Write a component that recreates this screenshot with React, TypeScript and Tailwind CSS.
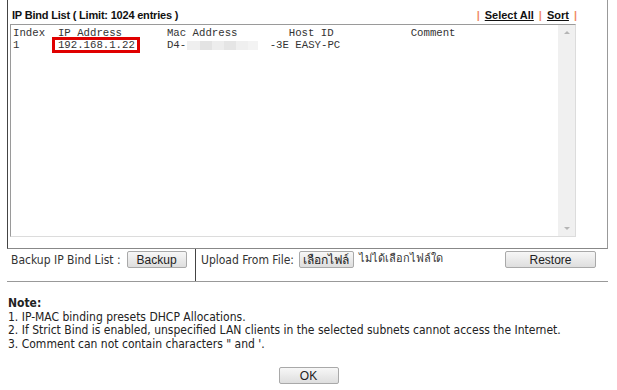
import React from "react";

const mono = { fontFamily: '"Liberation Mono", "Courier New", monospace' } as const;
const sans = { fontFamily: 'Tahoma, "DejaVu Sans Condensed", "Liberation Sans", sans-serif' } as const;

function Btn({ children, className = "" }: { children: React.ReactNode; className?: string }) {
  return (
    <div
      className={
        "flex items-center justify-center border border-[#a9a9a9] rounded-[2px] bg-gradient-to-b from-[#f7f7f7] to-[#dedede] text-[12px] text-[#222] " +
        className
      }
      style={{ fontFamily: '"Liberation Sans", Arial, sans-serif' }}
    >
      {children}
    </div>
  );
}

export default function App() {
  return (
    <div className="w-[617px] h-[390px] bg-white overflow-hidden relative" style={{ fontFamily: '"Liberation Sans", Arial, sans-serif' }}>
      {/* outer panel */}
      <div className="ml-[7px] w-[601px] h-[249px] border-l border-l-[#444] border-r border-r-[#999] border-b border-b-[#888] flex flex-col">
        <div className="h-[24px] flex items-end pl-[4px] pr-[30px] pb-[1px]">
          <div className="text-[11px] font-bold text-[#111] tracking-[-0.2px]">IP Bind List ( Limit: 1024 entries )</div>
          <div className="ml-auto flex items-center text-[11px] font-bold">
            <span className="text-[#f08a6a] mr-[5px]">|</span>
            <span className="underline text-[#111]">Select All</span>
            <span className="text-[#f08a6a] mx-[5px]">|</span>
            <span className="underline text-[#111]">Sort</span>
            <span className="text-[#f08a6a] ml-[5px]">|</span>
          </div>
        </div>
        <div className="ml-[2px] w-[566px] h-[213px] border border-t-[#9a9a9a] border-l-[#9a9a9a] border-r-[#dcdcdc] border-b-[#dcdcdc] flex">
          <div className="flex-1 relative text-[10.7px] leading-[12px] text-[#333] pl-[2px] pt-[2px] whitespace-pre" style={mono}>
            <div>{"Index  IP Address       Mac Address        Host ID            Comment"}</div>
            <div className="flex">
              <span>{"1      192.168.1.22     D4-"}</span>
              <span className="inline-flex w-[83.5px] h-[12px] items-center">
                <span className="w-[1px]" />
                <span className="w-[13px] h-[9px] bg-[#efefef]" />
                <span className="w-[12px] h-[9px] bg-[#e3e3e3]" />
                <span className="w-[12px] h-[9px] bg-[#ededed]" />
                <span className="w-[12px] h-[9px] bg-[#e5e5e5]" />
                <span className="w-[12px] h-[9px] bg-[#efefef]" />
                <span className="w-[10px] h-[9px] bg-[#f3f3f3]" />
              </span>
              <span>{"-3E EASY-PC"}</span>
            </div>
            <div className="absolute left-[41px] top-[12px] w-[88px] h-[16px] border-[3px] border-[#e00000]" />
          </div>
          <div className="w-[17px] bg-[#f0f0f0] flex flex-col items-center justify-between py-[6px]">
            <div className="w-0 h-0 border-l-[3px] border-r-[3px] border-b-[3px] border-l-transparent border-r-transparent border-b-[#b5b5b5]" />
            <div className="w-0 h-0 border-l-[3px] border-r-[3px] border-t-[3px] border-l-transparent border-r-transparent border-t-[#b5b5b5]" />
          </div>
        </div>
      </div>

      {/* backup / upload row */}
      <div className="ml-[7px] w-[601px] h-[33px] border-b border-b-[#999] flex text-[12px] text-[#333]" style={sans}>
        <div className="w-[189px] border-r border-r-[#444] flex items-start pt-[2px] pl-[4px]">
          <span className="h-[17px] flex items-center">Backup IP Bind List :</span>
          <Btn className="ml-[6px] w-[60px] h-[17px]">Backup</Btn>
        </div>
        <div className="flex-1 flex items-start pt-[2px] pl-[5px]">
          <span className="h-[17px] flex items-center">Upload From File:</span>
          <Btn className="ml-[5px] w-[55px] h-[17px] text-[11px]">เลือกไฟล์</Btn>
          <span className="ml-[5px] h-[17px] flex items-center text-[11px]">ไม่ได้เลือกไฟล์ใด</span>
          <Btn className="ml-auto mr-[12px] w-[91px] h-[17px]">Restore</Btn>
        </div>
      </div>

      {/* notes */}
      <div className="pl-[8px] pt-[15px] text-[12px] leading-[13.5px] text-[#222]" style={sans}>
        <div className="font-bold">Note:</div>
        <div>1. IP-MAC binding presets DHCP Allocations.</div>
        <div>2. If Strict Bind is enabled, unspecified LAN clients in the selected subnets cannot access the Internet.</div>
        <div>3. Comment can not contain characters " and '.</div>
      </div>

      <div className="flex justify-center mt-[16px]">
        <Btn className="w-[60px] h-[17px]">OK</Btn>
      </div>
    </div>
  );
}
